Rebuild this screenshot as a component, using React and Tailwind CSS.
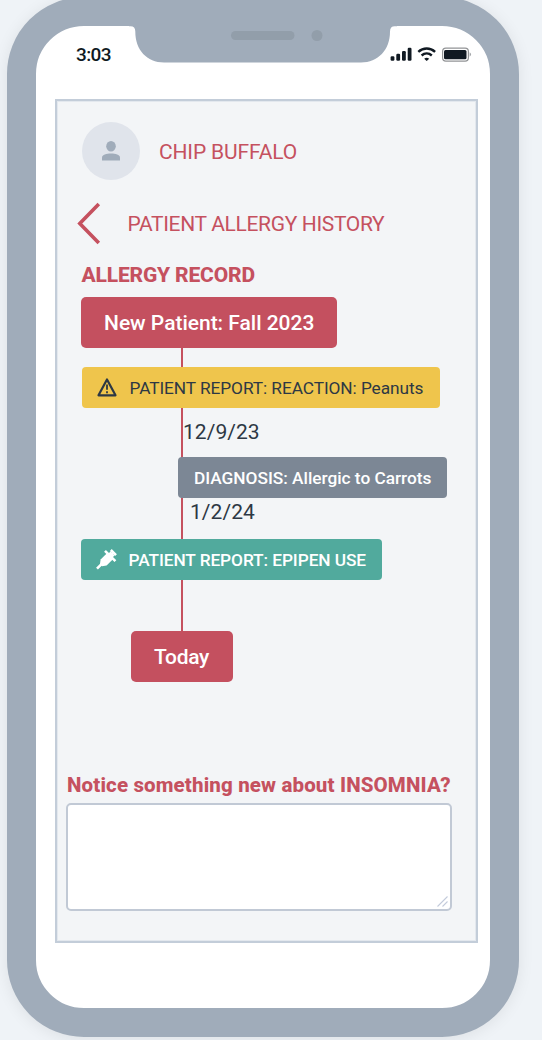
function StatusBar() {
  return (
    <div className="flex h-[73px] shrink-0 pl-10 pr-[20.5px] pt-[17px]">
      <span className="flex-1 text-[19px] leading-6 font-medium tracking-[-0.6px] text-[#101922]">3:03</span>
      <svg className="h-6 w-[82px]" viewBox="388 43 82 24" overflow="visible">
        <g fill="#101922">
          <rect x="390.6" y="56.3" width="3.8" height="4.5" rx="1.2" />
          <rect x="396.3" y="53.8" width="3.8" height="7" rx="1.2" />
          <rect x="402" y="51" width="3.8" height="9.8" rx="1.2" />
          <rect x="407.7" y="47.8" width="3.8" height="13" rx="1.2" />
          <path d="M424.2 58.8Q426.7 56.9 429.2 58.8L426.7 61Z" />
          <rect x="444" y="50" width="22.5" height="9.2" rx="1.5" />
          <path d="M469.6 52.3Q472.6 54.5 469.6 56.7Z" fill="#a5a8ab" />
        </g>
        <path d="M418.3 51.9C423.2 47.4 430.2 47.4 435.1 51.9M421.6 55.5C424.6 52.9 428.8 52.9 431.8 55.5" fill="none" stroke="#101922" strokeWidth="2.4" />
        <rect x="442.6" y="48.1" width="25.8" height="13" rx="3.3" fill="none" stroke="#929496" strokeWidth="1.2" />
      </svg>
    </div>
  );
}

function Notch() {
  return (
    <svg className="absolute left-[93px] top-[-1px] h-[38px] w-[268px]" viewBox="129 25 268 38">
      <path d="M129 25V26.3H130.5Q135.3 26.3 135.3 31.5C135.3 50 147 62.5 164 62.5H361C378 62.5 390 50 390 31.5Q390 26.3 394.8 26.3H397V25Z" fill="#a0acba" />
      <rect x="231" y="31" width="63.5" height="9" rx="4.5" fill="#929eaa" />
      <circle cx="317" cy="35.5" r="5.5" fill="#929eaa" />
    </svg>
  );
}

function Timeline() {
  return (
    <div className="relative flex flex-col items-start">
      <div className="absolute left-[124px] top-[50px] h-[285px] w-[2.4px] bg-[#c5515f]"></div>

      <div className="relative ml-[23.5px] flex h-[51px] w-[256.5px] items-center rounded-[5px] bg-[#c4505f] pt-[2px] pl-[23.5px] text-[21px] font-medium tracking-[-0.02px] whitespace-nowrap text-white">
        New Patient: Fall 2023
      </div>

      <div className="relative mt-[19px] ml-[24.5px] flex h-[41px] w-[358px] items-center rounded-[4px] bg-[#efc54c] pl-[15px] text-[17.3px] tracking-[-0.08px] whitespace-nowrap text-[#2d3844]">
        <svg className="mr-[12px] size-[21px] shrink-0" viewBox="0 0 21 21" fill="none" stroke="#2d3844">
          <path d="M10 2.5L18.5 18.3H1.5Z" strokeWidth="2.2" strokeLinejoin="round" />
          <path d="M10 7.5V12.7M10 14.3V16.3" strokeWidth="1.8" />
        </svg>
        <span className="pt-[2px]">PATIENT REPORT: REACTION: Peanuts</span>
      </div>

      <div className="relative ml-[126px] h-[49px] pt-[10px] text-[21px] leading-7 tracking-[0.05px] text-[#2d3844]">12/9/23</div>

      <div className="relative ml-[121px] flex h-[41px] w-[269px] items-center rounded-[4px] bg-[#7c8795] pt-[2px] pl-[16px] text-[17.3px] font-medium tracking-[-0.02px] whitespace-nowrap text-white">
        DIAGNOSIS: Allergic to Carrots
      </div>

      <div className="relative ml-[133px] h-[41px] text-[21px] leading-7 tracking-[0.05px] text-[#2d3844]">1/2/24</div>

      <div className="relative ml-[23.5px] flex h-[41px] w-[301px] items-center rounded-[4px] bg-[#51aa9d] pl-[15px] text-[17.3px] font-medium tracking-[-0.08px] whitespace-nowrap text-white">
        <svg className="mr-[12px] size-[21px] shrink-0" viewBox="0 0 21 21">
          <path d="M4.6 10.6L11.2 4L17.2 10L10.6 16.6L6 17.2L4 15.2Z" fill="white" />
          <path d="M1 19.6L5.5 15.1" stroke="white" strokeWidth="2.6" />
          <path d="M9 1.8L19.4 12.2M13.5 7.5L17.3 3.7M14.8 1L20 6.2" stroke="white" strokeWidth="2.6" />
          <path d="M12 5L14.5 2.5L18.5 6.5L16 9Z" fill="white" />
        </svg>
        <span className="pt-[2px]">PATIENT REPORT: EPIPEN USE</span>
      </div>

      <div className="relative mt-[51px] ml-[73.5px] flex h-[51px] w-[102px] items-center rounded-[5px] bg-[#c4505f] pt-[2px] pl-[23.5px] text-[21px] font-medium tracking-[-0.3px] text-white">
        Today
      </div>
    </div>
  );
}

function App() {
  return (
    <div className="h-[1040px] w-[542px] overflow-hidden bg-[#eff3f7] font-['Roboto',sans-serif]">
      <div className="relative -mt-[3px] ml-[7px] flex h-[1040px] w-[512.4px] flex-col rounded-[77px] border-[29px] border-[#a0acba] bg-white shadow-[0_2px_16px_rgba(0,0,0,0.08)]">
        <Notch />
        <StatusBar />

        <div className="ml-[19px] flex h-[844px] w-[423px] shrink-0 flex-col border-2 border-[#c3cdd9] bg-[#f3f5f7] text-[#c5515f] shadow-[inset_0_0_0_1px_#e3e8ee]">
          <div className="mt-[21px] ml-[25px] flex items-center gap-[19px]">
            <div className="flex size-[58px] items-center justify-center rounded-full bg-[#e0e4eb]">
              <svg className="h-5 w-[18px]" viewBox="0 0 18 20" fill="#a0acba">
                <ellipse cx="9" cy="5.3" rx="4.8" ry="5.3" />
                <path d="M0 19.5V16.5C0 11.3 18 11.3 18 16.5V19.5Z" />
              </svg>
            </div>
            <span className="pt-[3px] text-[21px] tracking-[-0.15px]">CHIP BUFFALO</span>
          </div>

          <div className="mt-[23px] ml-[19px] flex h-[41px] items-center">
            <svg className="h-[43px] w-[26px]" viewBox="0 0 26 43" fill="none" stroke="#c5515f" strokeWidth="3.6">
              <path d="M22.8 2L3.8 21.5L22.8 41" />
            </svg>
            <span className="ml-[25.5px] pt-[2px] text-[21px] tracking-[-0.34px] whitespace-nowrap">PATIENT ALLERGY HISTORY</span>
          </div>

          <h2 className="ml-[24.5px] h-[53px] pt-[17px] text-[21px] leading-7 font-extrabold tracking-[-0.17px]">ALLERGY RECORD</h2>

          <Timeline />

          <label className="mt-[89px] ml-[10px] h-[32px] text-[20.5px] leading-7 font-extrabold tracking-[0.14px] whitespace-nowrap">
            Notice something new about INSOMNIA?
          </label>
          <div className="relative ml-[9px] h-[108px] w-[386px]">
            <textarea className="block h-full w-full resize-none rounded-[5px] border-2 border-[#c1c9d5] bg-white p-3 text-base outline-none" />
            <svg className="absolute right-[4px] bottom-[4px] size-[11px]" viewBox="0 0 11 11" stroke="#c3cbdb" strokeWidth="1.1">
              <path d="M0.5 10.5L10.5 0.5M5.5 10.5L10.5 5.5" />
            </svg>
          </div>
        </div>
      </div>
    </div>
  );
}

export default App;
